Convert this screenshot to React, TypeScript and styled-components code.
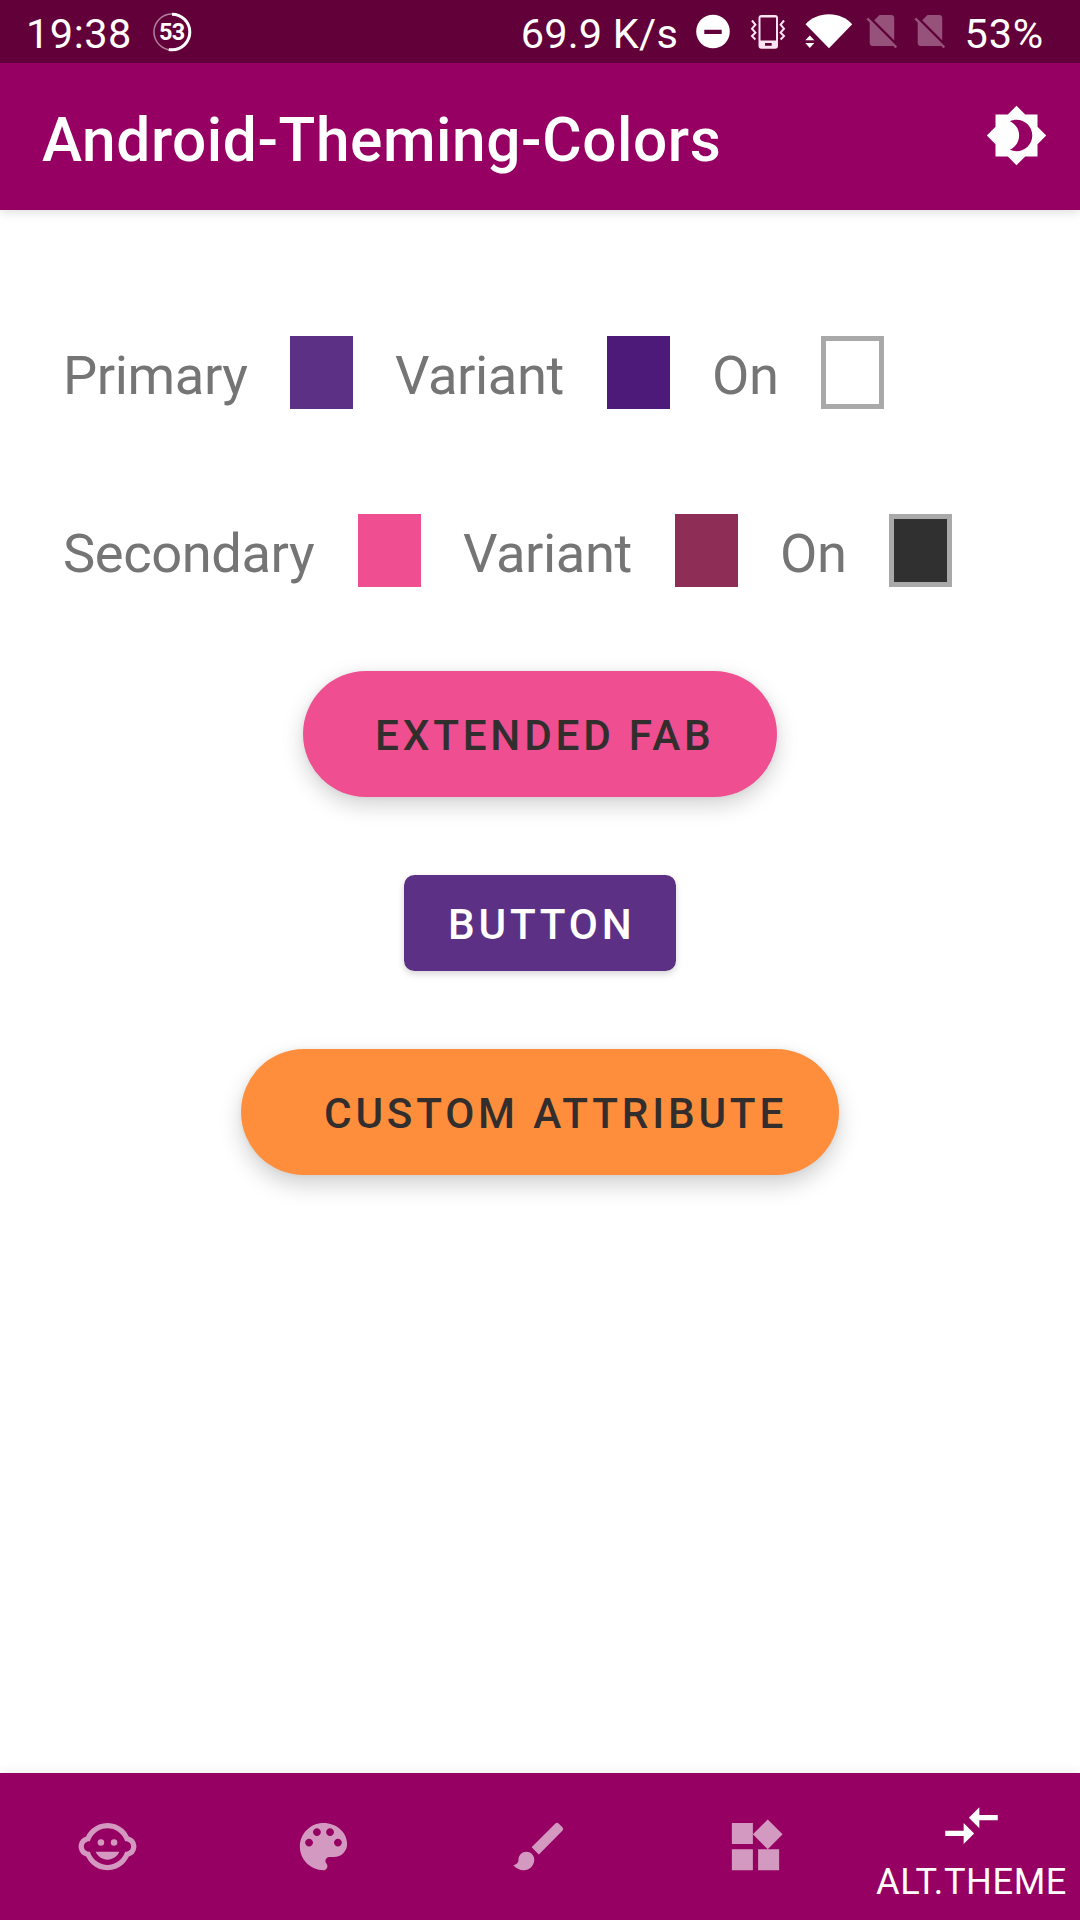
import React from 'react';
import styled, { createGlobalStyle } from 'styled-components';
import { MdBrightness4, MdBrush, MdChildCare, MdCompareArrows, MdWidgets } from 'react-icons/md';

const GlobalStyle = createGlobalStyle`
  * { box-sizing: border-box; }
  body {
    margin: 0;
    background: #fff;
    font-family: Roboto, "Liberation Sans", sans-serif;
  }
`;

const Screen = styled.div`
  width: 1080px;
  height: 1920px;
  display: flex;
  flex-direction: column;
  background: #fff;
  overflow: hidden;
`;

const StatusBar = styled.header`
  height: 63px;
  flex: none;
  display: flex;
  align-items: center;
  padding: 0 36px 0 26px;
  background: #62003a;
  color: #fff;
  z-index: 1;
`;

const StatusText = styled.span<{ $spacing: number; $before?: number }>`
  margin-left: ${(p) => p.$before ?? 0}px;
  font-size: 41.5px;
  line-height: 49px;
  padding-top: 3px;
  letter-spacing: ${(p) => p.$spacing}px;
`;

const StatusGroup = styled.div`
  display: flex;
  align-items: center;
  margin-left: auto;
`;

const StatusIcon = styled.svg<{ $before: number }>`
  display: block;
  flex: none;
  height: 63px;
  margin-left: ${(p) => p.$before}px;
`;

const BatteryRing = styled.div`
  display: grid;
  place-items: center;
  width: 40px;
  height: 63px;
  margin-left: 20px;
  > * { grid-area: 1 / 1; }
`;

const RingValue = styled.span`
  font-size: 23.5px;
  font-weight: 700;
  line-height: 28px;
  letter-spacing: -0.6px;
`;

const AppBar = styled.div`
  height: 147px;
  flex: none;
  display: flex;
  align-items: center;
  justify-content: space-between;
  padding: 0 32px 0 42px;
  background: #950062;
  color: #fff;
  box-shadow: 0 2px 10px rgba(0, 0, 0, 0.14);

  svg { margin-bottom: 2px; }
`;

const Title = styled.h1`
  margin: 0;
  padding-top: 7px;
  font-size: 60.4px;
  font-weight: 500;
  line-height: 71px;
  letter-spacing: 0.57px;
`;

const Content = styled.main`
  flex: 1;
  display: flex;
  flex-direction: column;
  padding-top: 126px;
`;

const SwatchRow = styled.div`
  display: flex;
  align-items: center;
  height: 73px;
  padding-left: 63px;
  margin-bottom: 105px;
  &:nth-of-type(2) { margin-bottom: 84px; }
`;

const Label = styled.span<{ $width: number }>`
  width: ${(p) => p.$width}px;
  font-size: 54.3px;
  line-height: 64px;
  padding-top: 6px;
  letter-spacing: -0.42px;
  color: #757575;
  white-space: nowrap;
`;

const Swatch = styled.span<{ $color: string; $outlined?: boolean }>`
  width: 63px;
  height: 73px;
  margin: 0 42px;
  background: ${(p) => p.$color};
  border: ${(p) => (p.$outlined ? '5px solid #a9a9a9' : 'none')};
`;

const Actions = styled.div`
  display: flex;
  flex-direction: column;
  align-items: center;
  gap: 78px;
`;

const BaseButton = styled.button`
  border: 0;
  font-family: inherit;
  font-size: 42.26px;
  font-weight: 500;
  letter-spacing: 3.8px;
  line-height: 50px;
  text-align: left;
  white-space: nowrap;
`;

const Fab = styled(BaseButton)<{ $color: string; $width: number; $inset: number; $lift: number }>`
  width: ${(p) => p.$width}px;
  height: 126px;
  padding: 4px 0 0 ${(p) => p.$inset}px;
  border-radius: 63px;
  background: ${(p) => p.$color};
  color: #332e2e;
  box-shadow: 0 ${(p) => p.$lift}px 22px rgba(0, 0, 0, 0.18), 0 0 6px rgba(0, 0, 0, 0.05);
`;

const ContainedButton = styled(BaseButton)`
  width: 272px;
  height: 96px;
  padding: 4px 0 0 44px;
  border-radius: 10.5px;
  background: #5c3084;
  color: #fff;
  box-shadow: 0 3px 7px rgba(0, 0, 0, 0.17);
`;

const BottomNav = styled.nav`
  height: 147px;
  flex: none;
  display: grid;
  grid-template-columns: repeat(5, 1fr);
  background: #950062;
  box-shadow: 0 -1px 10px rgba(0, 0, 0, 0.08);
`;

const NavItem = styled.div<{ $active?: boolean }>`
  display: flex;
  flex-direction: column;
  align-items: center;
  justify-content: ${(p) => (p.$active ? 'flex-start' : 'center')};
  padding-top: ${(p) => (p.$active ? 21 : 0)}px;
  padding-right: 1px;
  color: ${(p) => (p.$active ? '#fff' : 'rgba(255, 255, 255, 0.6)')};
`;

const NavLabel = styled.span`
  margin-top: 4px;
  font-size: 36.2px;
  line-height: 42px;
  letter-spacing: 0.6px;
`;

const DoNotDisturb = () => (
  <StatusIcon width="36" viewBox="0 0 36 63" $before={17}>
    <path fill="#fff" fillRule="evenodd" d="M18 14.7a16.8 16.8 0 1 1 0 33.6a16.8 16.8 0 0 1 0-33.6zM9.3 29.7v4.2h17.4v-4.2z" />
  </StatusIcon>
);

const Vibrate = () => (
  <StatusIcon width="36" viewBox="0 0 36 63" $before={19} fill="none" stroke="#fbe4f2" strokeWidth="2">
    <path fill="#fbe4f2" stroke="none" fillRule="evenodd" d="M11.5 15h13.5a3 3 0 0 1 3 3v27.7a3 3 0 0 1-3 3h-13.5a3 3 0 0 1-3-3v-27.7a3 3 0 0 1 3-3zM10.5 17.5v23h15.5v-23zM15 43v2.7h6.7v-2.7z" />
    <path d="M2 20.5l3.4 4.2l-3.4 4l3.4 4l-3.4 3.4l3.4 3.4M34 20.5l-3.4 4.2l3.4 4l-3.4 4l3.4 3.4l-3.4 3.4" />
  </StatusIcon>
);

const Wifi = () => (
  <StatusIcon width="48" viewBox="0 0 48 63" $before={19} fill="#fff">
    <path d="M24 48.3L.5 24.3C6 18 14.5 14.3 24 14.3S41.5 18 47.2 24.3z" />
    <path fill="#62003a" d="M0 33h7l6 6v10h-13z" />
    <path d="M.3 40.3L4.8 35.5l4.5 4.8zM.3 43h9l-4.5 5z" />
  </StatusIcon>
);

const NoSim = ({ before }: { before: number }) => (
  <StatusIcon width="32" viewBox="0 0 32 63" $before={before} fill="#96527a">
    <path d="M3.7 20.7v22.3a3 3 0 0 0 3 3h19a3 3 0 0 0 2.3-1zM8.2 20.3l5.3-5.3h11.7a3 3 0 0 1 3 3v22.3z" />
    <path d="M1.3 18.3L30.3 47.3" fill="none" stroke="#96527a" strokeWidth="2.4" />
  </StatusIcon>
);

const Palette = () => (
  <svg width="63" height="63" viewBox="0 0 24 24" fill="currentColor">
    <path d="M12 3c-4.97 0-9 4.03-9 9s4.03 9 9 9c.83 0 1.5-.67 1.5-1.5 0-.39-.15-.74-.39-1.01-.23-.26-.38-.61-.38-.99 0-.83.67-1.5 1.5-1.5H16c2.76 0 5-2.24 5-5 0-4.42-4.03-8-9-8zm-5.5 9c-.83 0-1.5-.67-1.5-1.5S5.67 9 6.5 9 8 9.67 8 10.5 7.33 12 6.5 12zm3-4C8.67 8 8 7.33 8 6.5S8.67 5 9.5 5s1.5.67 1.5 1.5S10.33 8 9.5 8zm5 0c-.83 0-1.5-.67-1.5-1.5S13.67 5 14.5 5s1.5.67 1.5 1.5S15.33 8 14.5 8zm3 4c-.83 0-1.5-.67-1.5-1.5S16.67 9 17.5 9s1.5.67 1.5 1.5-.67 1.5-1.5 1.5z" />
  </svg>
);

export default function App() {
  return (
    <>
      <GlobalStyle />
      <Screen>
        <StatusBar>
          <StatusText $spacing={0.5}>19:38</StatusText>
          <BatteryRing>
            <svg width="40" height="40" viewBox="0 0 40 40" fill="none" stroke="#fff">
              <circle cx="20" cy="20" r="18" strokeWidth="1.5" opacity="0.5" />
              <circle cx="20" cy="20" r="17.8" strokeWidth="3" pathLength="100" strokeDasharray="53 47" transform="rotate(-90 20 20)" />
            </svg>
            <RingValue>53</RingValue>
          </BatteryRing>
          <StatusGroup>
            <StatusText $spacing={0.2}>69.9 K/s</StatusText>
            <DoNotDisturb />
            <Vibrate />
            <Wifi />
            <NoSim before={13} />
            <NoSim before={16} />
            <StatusText $spacing={0.8} $before={18.5}>53%</StatusText>
          </StatusGroup>
        </StatusBar>
        <AppBar>
          <Title>Android-Theming-Colors</Title>
          <MdBrightness4 size={63} />
        </AppBar>
        <Content>
          <SwatchRow>
            <Label $width={185}>Primary</Label>
            <Swatch $color="#5c3084" />
            <Label $width={170}>Variant</Label>
            <Swatch $color="#4e1a7a" />
            <Label $width={67}>On</Label>
            <Swatch $color="#ffffff" $outlined />
          </SwatchRow>
          <SwatchRow>
            <Label $width={253}>Secondary</Label>
            <Swatch $color="#ef4f91" />
            <Label $width={170}>Variant</Label>
            <Swatch $color="#8e2e57" />
            <Label $width={67}>On</Label>
            <Swatch $color="#303030" $outlined />
          </SwatchRow>
          <Actions>
            <Fab $color="#ef4f91" $width={474} $inset={72} $lift={8}>EXTENDED FAB</Fab>
            <ContainedButton>BUTTON</ContainedButton>
            <Fab $color="#ff8e3c" $width={598} $inset={83} $lift={10}>CUSTOM ATTRIBUTE</Fab>
          </Actions>
        </Content>
        <BottomNav>
          <NavItem><MdChildCare size={63} /></NavItem>
          <NavItem><Palette /></NavItem>
          <NavItem><MdBrush size={63} /></NavItem>
          <NavItem><MdWidgets size={63} /></NavItem>
          <NavItem $active>
            <MdCompareArrows size={63} />
            <NavLabel>ALT.THEME</NavLabel>
          </NavItem>
        </BottomNav>
      </Screen>
    </>
  );
}
